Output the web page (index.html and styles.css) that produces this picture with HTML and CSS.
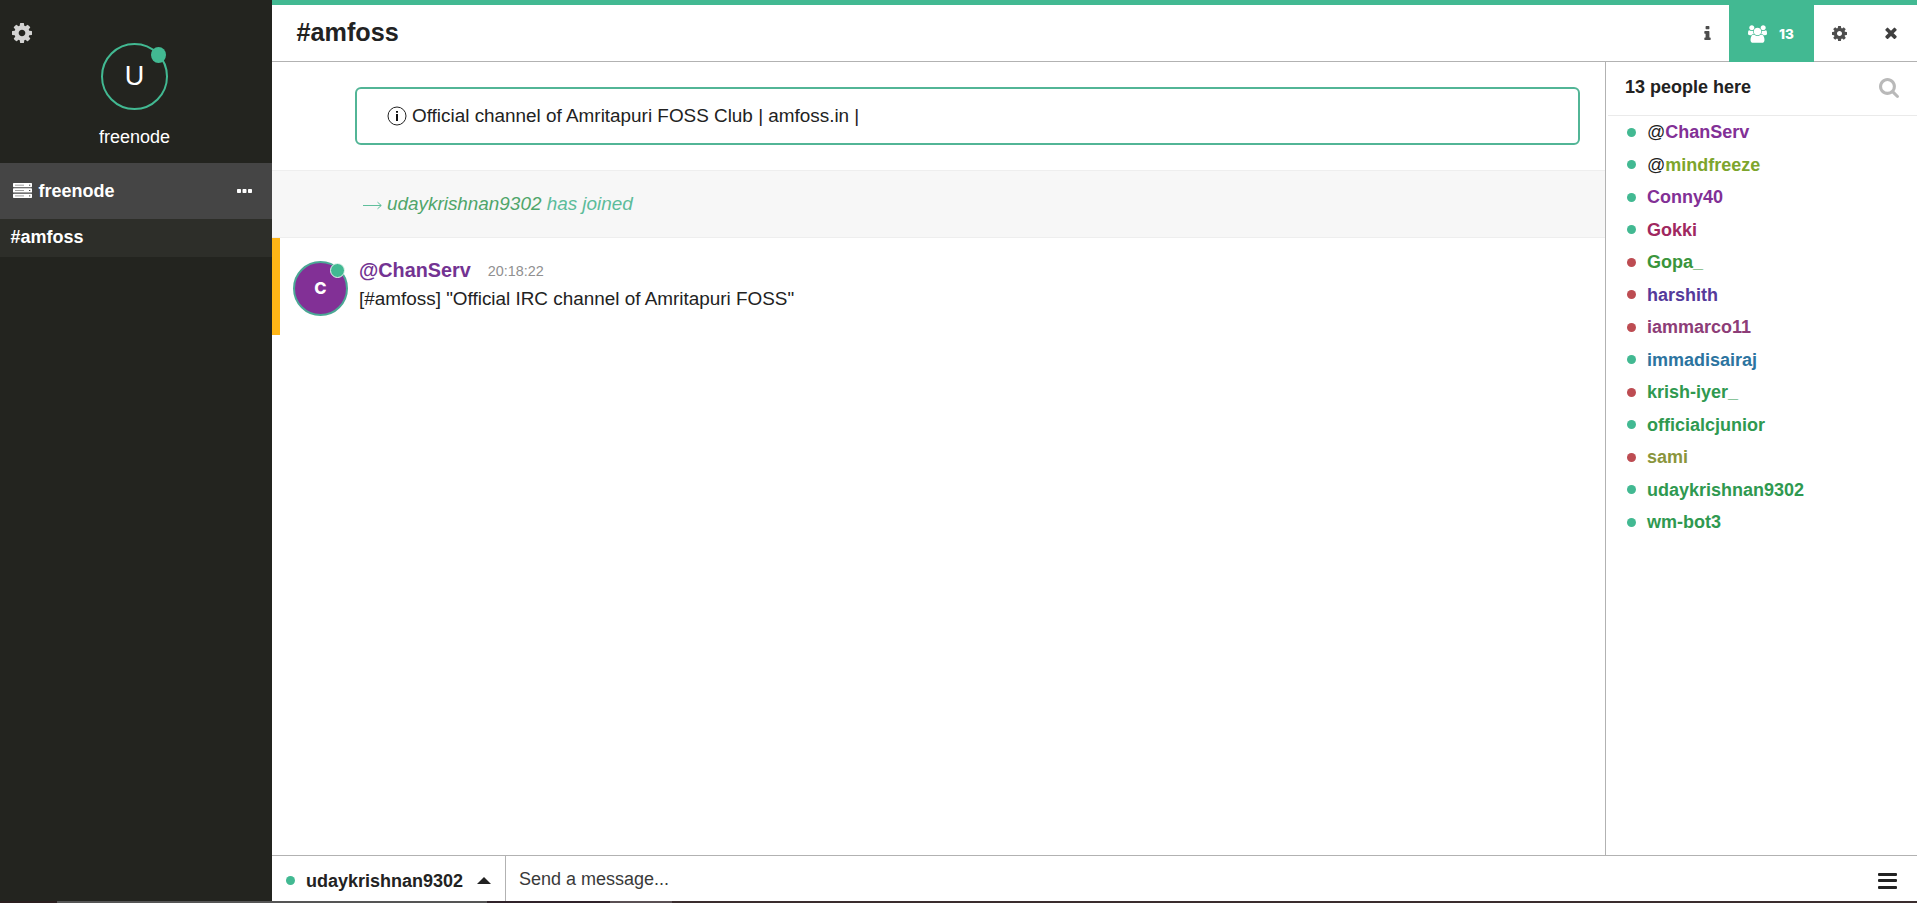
FILE: index.html
```
<!DOCTYPE html>
<html lang="en">
<head>
<meta charset="utf-8">
<title>#amfoss</title>
<link rel="stylesheet" href="styles.css">
</head>
<body>
<svg class="defs" width="0" height="0">
<symbol id="cog" viewBox="128 128 1536 1536"><path d="M1152 896q0-106-75-181t-181-75-181 75-75 181 75 181 181 75 181-75 75-181zm512-109v222q0 12-8 23t-20 13l-185 28q-19 54-39 91 35 50 107 138 10 12 10 25t-9 23q-27 37-99 108t-94 71q-12 0-26-9l-138-108q-44 23-91 38-16 136-29 186-7 28-36 28h-222q-14 0-24.5-8.5t-11.5-21.5l-28-184q-49-16-90-37l-141 107q-10 9-25 9-14 0-25-11-126-114-165-168-7-10-7-23 0-12 8-23 15-21 51-66.5t54-70.5q-27-50-41-99l-183-27q-13-2-21-12.5t-8-23.5v-222q0-12 8-23t19-13l186-28q14-46 39-92-40-57-107-138-10-12-10-24 0-10 9-23 26-36 98.5-107.5t94.5-71.5q13 0 26 10l138 107q44-23 91-38 16-136 29-186 7-28 36-28h222q14 0 24.5 8.5t11.5 21.5l28 184q49 16 90 37l142-107q9-9 24-9 13 0 25 10 129 119 165 170 7 8 7 22 0 12-8 23-15 21-51 66.5t-54 70.5q26 50 41 98l183 28q13 2 21 12.5t8 23.5z"/></symbol>
</svg>
<div class="app">
  <aside class="sidebar">
    <div class="profile">
      <svg class="settings"><use href="#cog"/></svg>
      <div class="user-avatar">U<span class="badge"></span></div>
      <div class="user-name">freenode</div>
    </div>
    <div class="network">
      <svg class="server" viewBox="0 0 19 15"><path fill="#fff" d="M.7 0h17.6q.7 0 .7.7v2.600q0 1-.7 1H.7Q0 4.300 0 3.300V.7Q0 0 .7 0zM.7 5.300h17.600q.7 0 .7.7v2.900q0 .7-.7.7H.7Q0 9.600 0 8.900V6Q0 5.300.7 5.300zM.7 10.700h17.600q.7 0 .7.7v2.900q0 .7-.7.7H.7Q0 15 0 14.300v-2.900Q0 10.700 .7 10.700z"/><path stroke="#888" stroke-width=".8" d="M2 2.200h9M2 7.500h9M2 12.900h9"/><path stroke="#444" d="M16 2.200h1.300M16 7.500h1.300M16 12.900h1.300"/></svg>
      <b>freenode</b>
      <svg class="dots" viewBox="0 0 15 4"><path d="M.8 0h2.400q.8 0 .8.8v2.400q0 .8-.8.8H.8Q0 4 0 3.200V.8Q0 0 .8 0zm5.500 0h2.400q.8 0 .8.8v2.400q0 .8-.8.8H6.300q-.8 0-.8-.8V.8q0-.8.8-.8zm5.500 0h2.400q.8 0 .8.8v2.400q0 .8-.8.8h-2.400q-.8 0-.8-.8V.8q0-.8.8-.8z"/></svg>
    </div>
    <div class="channel">#amfoss</div>
  </aside>
  <main class="main">
    <header class="header">
      <h1>#amfoss</h1>
      <div class="tool info"><svg viewBox="576 128 640 1408"><path d="M1216 1344v128q0 26-19 45t-45 19h-512q-26 0-45-19t-19-45v-128q0-26 19-45t45-19h64v-384h-64q-26 0-45-19t-19-45v-128q0-26 19-45t45-19h384q26 0 45 19t19 45v576h64q26 0 45 19t19 45zm-128-1152v192q0 26-19 45t-45 19h-256q-26 0-45-19t-19-45v-192q0-26 19-45t45-19h256q26 0 45 19t19 45z"/></svg></div>
      <div class="tool people"><svg viewBox="0 0 1920 1792"><path d="M593 896q-162 5-265 128h-134q-82 0-138-40.5t-56-118.5q0-353 124-353 6 0 43.5 21t97.5 42.5 119 21.5q67 0 133-23-5 37-5 66 0 139 81 256zm1071 637q0 120-73 189.5t-194 69.5h-874q-121 0-194-69.5t-73-189.500q0-53 3.500-103.500t14-109 26.500-108.500 43-97.500 62-81 85.500-53.500 111.500-20q10 0 43 21.500t73 48 107 48 135 21.500 135-21.500 107-48 73-48 43-21.500q61 0 111.500 20t85.500 53.500 62 81 43 97.500 26.500 108.500 14 109 3.500 103.500zm-1024-1277q0 106-75 181t-181 75-181-75-75-181 75-181 181-75 181 75 75 181zm704 384q0 159-112.500 271.500t-271.500 112.500-271.500-112.500-112.500-271.500 112.500-271.500 271.500-112.500 271.500 112.500 112.500 271.500zm576 225q0 78-56 118.500t-138 40.500h-134q-103-123-265-128 81-117 81-256 0-29-5-66 66 23 133 23 59 0 119-21.500t97.500-42.500 43.500-21q124 0 124 353zm-128-609q0 106-75 181t-181 75-181-75-75-181 75-181 181-75 181 75 75 181z"/></svg><span>13</span></div>
      <div class="tool cog"><svg><use href="#cog"/></svg></div>
      <div class="tool close"><svg viewBox="302 302 1188 1252"><path d="M1490 1322q0 40-28 68l-136 136q-28 28-68 28t-68-28l-294-294-294 294q-28 28-68 28t-68-28l-136-136q-28-28-28-68t28-68l294-294-294-294q-28-28-28-68t28-68l136-136q28-28 68-28t68 28l294 294 294-294q28-28 68-28t68 28l136 136q28 28 28 68t-28 68l-294 294 294 294q28 28 28 68z"/></svg></div>
    </header>
    <div class="content">
      <section class="messages">
        <div class="topic">
          <svg viewBox="0 0 20 20"><circle cx="10" cy="10" r="9" fill="none" stroke="#222"/><path d="M9 5h2v1.800H9zM9 8h2v7H9z" fill="#111"/></svg>
          <span>Official channel of Amritapuri FOSS Club | amfoss.in |</span>
        </div>
        <div class="joined">
          <svg viewBox="0 0 19 9"><path d="M0 4.500h18M14.500 1.200l3.800 3.300-3.800 3.300" fill="none" stroke="#5fbf9c"/></svg>
          <span><span class="who">udaykrishnan9302</span> has joined</span>
        </div>
        <article class="message">
          <div class="avatar">C<span class="badge"></span></div>
          <div class="body">
            <div class="meta"><b>@ChanServ</b><time>20:18:22</time></div>
            <div class="text">[#amfoss] "Official IRC channel of Amritapuri FOSS"</div>
          </div>
        </article>
      </section>
      <aside class="nicklist">
        <div class="nick-head"><span>13 people here</span><svg viewBox="64 128 1664 1664"><path d="M1216 832q0-185-131.500-316.500t-316.500-131.500-316.500 131.500-131.500 316.500 131.500 316.500 316.500 131.500 316.500-131.500 131.500-316.500zm512 832q0 52-38 90t-90 38q-54 0-90-38l-343-342q-179 124-399 124-143 0-273.500-55.500t-225-150-150-225-55.500-273.500 55.500-273.500 150-225 225-150 273.500-55.500 273.500 55.500 225 150 150 225 55.500 273.500q0 220-124 399l343 343q37 37 37 90z"/></svg></div>
        <ul>
          <li><i class="dot"></i>@<b class="c-violet">ChanServ</b></li>
          <li><i class="dot"></i>@<b class="c-lime">mindfreeze</b></li>
          <li><i class="dot"></i><b class="c-violet">Conny40</b></li>
          <li><i class="dot"></i><b class="c-crimson">Gokki</b></li>
          <li><i class="dot away"></i><b class="c-leaf">Gopa_</b></li>
          <li><i class="dot away"></i><b class="c-indigo">harshith</b></li>
          <li><i class="dot away"></i><b class="c-plum">iammarco11</b></li>
          <li><i class="dot"></i><b class="c-blue">immadisairaj</b></li>
          <li><i class="dot away"></i><b class="c-green">krish-iyer_</b></li>
          <li><i class="dot"></i><b class="c-green">officialcjunior</b></li>
          <li><i class="dot away"></i><b class="c-olive">sami</b></li>
          <li><i class="dot"></i><b class="c-green">udaykrishnan9302</b></li>
          <li><i class="dot"></i><b class="c-green">wm-bot3</b></li>
        </ul>
      </aside>
    </div>
    <footer class="control">
      <div class="me"><i class="dot"></i><b>udaykrishnan9302</b><i class="caret"></i></div>
      <div class="input">Send a message...</div>
      <div class="bars"><i></i><i></i><i></i></div>
    </footer>
  </main>
</div>
<div class="edge"></div>
</body>
</html>
```
FILE: styles.css
```
* { box-sizing: border-box; }
body {
  margin: 0;
  width: 1917px;
  height: 903px;
  overflow: hidden;
  display: flex;
  flex-direction: column;
  background: #fff;
  color: #222;
  font: 18px/24px Arial, "Liberation Sans", sans-serif;
}
svg { display: block; flex: none; }
.defs { position: absolute; }
.app { display: flex; height: 901px; }
.edge {
  height: 2px;
  background: linear-gradient(90deg, #2b1e1f 57px, #555 57px 487px, #30232a 487px 610px, #5a5054 610px 672px, #3a2d2e 672px);
}

.sidebar { width: 272px; background: #23241f; color: #fff; }
.profile {
  position: relative;
  height: 163px;
  padding-top: 43px;
  padding-right: 3px;
  display: flex;
  flex-direction: column;
  align-items: center;
}
.settings { position: absolute; left: 11.500px; top: 23px; width: 20px; height: 20px; fill: #d3d3d2; }
.user-avatar {
  position: relative;
  width: 67px;
  height: 67px;
  border: 2px solid #42b992;
  border-radius: 50%;
  font-size: 27px;
  line-height: 62px;
  text-align: center;
}
.user-avatar .badge { right: 0; top: 2px; width: 15px; height: 16px; }
.badge { position: absolute; border-radius: 50%; background: #42b992; }
.user-name { margin-top: 15px; }
.network {
  height: 56px;
  display: flex;
  align-items: center;
  padding: 0 20px 0 13px;
  background: #454545;
}
.server { width: 19px; height: 15px; margin-right: 6.500px; margin-top: -1px; }
.network b { flex: 1; }
.dots { width: 15px; height: 4px; margin-top: -1px; fill: #fff; }
.channel {
  height: 38px;
  padding-left: 10.500px;
  line-height: 37px;
  font-weight: bold;
  background: #2d2e29;
}

.main { flex: 1; display: flex; flex-direction: column; border-top: 5px solid #42b992; }
.header { display: flex; height: 57px; border-bottom: 1px solid #b2b2b2; }
.header h1 { flex: 1; margin: 0; padding-left: 24.500px; font-size: 25.2px; line-height: 54px; }
.tool { display: flex; align-items: center; height: 56px; fill: #4d4d4d; }
.tool.info { width: 25px; }
.info svg { width: 7px; height: 14px; }
.people { width: 85px; height: 57px; padding-left: 19px; gap: 12px; background: #42b992; color: #fff; fill: #fff; font: 800 13.500px Inter, Arial, sans-serif; }
.people svg { width: 19px; height: 18px; }
.tool.cog { width: 71px; padding-left: 18px; }
.cog svg { width: 15px; height: 15px; }
.close { width: 32px; fill: #3f3f3f; }
.close svg { width: 12px; height: 12px; }

.content { flex: 1; display: flex; min-height: 0; }
.messages { flex: 1; font-size: 18.900px; }
.topic {
  display: flex;
  align-items: center;
  gap: 5px;
  height: 58px;
  margin: 25px 25px 25px 83px;
  padding-left: 30px;
  border: 2px solid #52b596;
  border-radius: 6px;
}
.topic svg { width: 20px; height: 20px; }
.joined {
  display: flex;
  align-items: center;
  gap: 5px;
  height: 68px;
  padding: 0 0 1px 91px;
  background: #f7f7f7;
  border: solid #eee;
  border-width: 1px 0;
  color: #5cbc9a;
  font-style: italic;
}
.joined svg { width: 19px; height: 9px; margin-top: 3px; }
.who { color: #4fa56a; }
.message { display: flex; gap: 11px; height: 97px; padding: 23px 0 0 13px; border-left: 8px solid #ffb516; }
.avatar {
  position: relative;
  width: 55px;
  height: 55px;
  border: 2px solid #4ba795;
  border-radius: 50%;
  background: #823096;
  color: #fff;
  font: 800 16.500px/50px Inter, Arial, sans-serif;
  text-align: center;
}
.avatar .badge { right: 1px; top: 0; width: 15px; height: 15px; border: 1px solid #e8f5f0; }
.meta { line-height: 20px; margin-top: -1px; }
.meta b { font-size: 19.8px; color: #733392; }
.meta time { margin-left: 17px; font-size: 14.4px; color: #909090; position: relative; top: -1px; }
.text { line-height: 34px; }

.nicklist { width: 312px; border-left: 1px solid #b2b2b2; }
.nick-head {
  display: flex;
  align-items: center;
  justify-content: space-between;
  height: 54px;
  margin-left: 2px;
  padding: 0 18px 4px 17px;
  border-bottom: 1px solid #eaeaea;
  font-weight: bold;
}
.nick-head svg { width: 20px; height: 20px; margin-top: 2px; fill: #b9b9b9; }
.nicklist ul { margin: 0; padding: 0 0 0 21px; list-style: none; }
.nicklist li { display: flex; align-items: center; height: 32.500px; }
.dot { flex: none; width: 9px; height: 9px; border-radius: 50%; background: #42b992; }
.nicklist .dot { margin-right: 11px; }
.dot.away { background: #bd4c52; }
.c-violet { color: #823096; }
.c-lime { color: #7da52c; }
.c-crimson { color: #a02860; }
.c-leaf { color: #3a953c; }
.c-indigo { color: #543a9b; }
.c-plum { color: #8d3d78; }
.c-blue { color: #2c749f; }
.c-green { color: #2f9950; }
.c-olive { color: #8a953c; }

.control { display: flex; height: 46px; border-top: 1px solid #b2b2b2; }
.me { display: flex; align-items: center; width: 234px; padding: 4px 0 0 14px; border-right: 1px solid #b2b2b2; }
.me b { margin: 0 14px 0 11px; }
.caret { border: solid transparent; border-width: 0 7px 7px; border-bottom-color: #222; margin-top: -1px; }
.input { flex: 1; padding-left: 13px; line-height: 46px; color: #3a3a3a; }
.bars { width: 39px; padding-top: 17px; display: flex; flex-direction: column; gap: 3.300px; }
.bars i { width: 19px; height: 3px; border-radius: 1px; background: #222; }
```
